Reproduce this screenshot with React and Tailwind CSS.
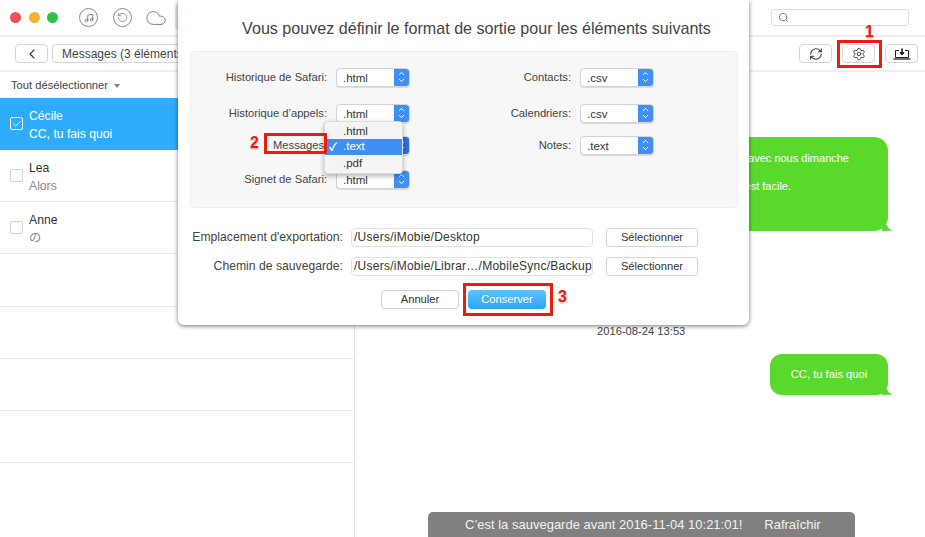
import React from "react";
import { ChevronLeft, Check, Search, Settings, RefreshCw, RotateCcw, Cloud, Music, ChevronUp, ChevronDown } from "lucide-react";

const font = { fontFamily: '"Liberation Sans", "Noto Sans CJK JP", sans-serif' };

function Select({ value, dark }) {
  return (
    <div className="flex h-[19px] w-[74px] items-stretch overflow-hidden rounded-[4px] border border-[#d4d4d4] bg-white shadow-[0_1px_1px_rgba(0,0,0,0.12)]">
      <div className="flex-1 pl-[6px] text-[11.5px] leading-[18px] text-[#333]">{value}</div>
      <div className={`flex w-[15px] flex-col items-center justify-center ${dark ? "bg-[#2a6fd6]" : "bg-[#3f8ff5]"}`}>
        <ChevronUp size={9} strokeWidth={2.5} className="mb-[-2px] text-white" />
        <ChevronDown size={9} strokeWidth={2.5} className="text-white" />
      </div>
    </div>
  );
}

function FieldRow({ label, value, dark, labelClass = "" }) {
  return (
    <div className="flex items-center">
      <div className={`w-[136px] text-right text-[11.2px] text-[#444] ${labelClass}`}>{label}</div>
      <div className="ml-[9px]"><Select value={value} dark={dark} /></div>
    </div>
  );
}

function ContactRow({ name, sub, selected }) {
  return (
    <div className={`flex h-[52px] items-center border-b ${selected ? "border-[#2fabfc] bg-[#2fabfc]" : "border-[#ececec] bg-white"}`}>
      <div className={`ml-[10px] flex h-[13px] w-[13px] items-center justify-center rounded-[2px] border ${selected ? "border-white" : "border-[#d4d4d4]"}`}>
        {selected && <Check size={10} strokeWidth={2} className="text-white" />}
      </div>
      <div className="ml-[6px] flex flex-col gap-[3px] pt-[4px] text-[12.2px] leading-[15px]">
        <div className={selected ? "text-white" : "text-[#333]"}>{name}</div>
        <div className={selected ? "text-white" : "text-[#8a8a8a]"}>{sub}</div>
      </div>
    </div>
  );
}

function ToolBtn({ children }) {
  return <div className="flex h-[19px] w-[33px] items-center justify-center rounded-[4px] border border-[#d6d6d6] bg-white text-[#333]">{children}</div>;
}

function PathRow({ label, value }) {
  return (
    <div className="flex items-center">
      <div className="w-[153px] whitespace-nowrap text-right text-[12.2px] text-[#444]">{label}</div>
      <div className="ml-[8px] h-[19px] w-[242px] whitespace-nowrap rounded-[4px] border border-[#e2e2e2] pl-[2px] text-[12px] leading-[17px] tracking-[0.25px] text-[#333]">{value}</div>
      <div className="ml-[13px] flex h-[19px] w-[92px] items-center justify-center rounded-[3px] border border-[#d6d6d6] text-[11.2px] text-[#333]">Sélectionner</div>
    </div>
  );
}

function Num({ children, className }) {
  return (
    <div className={`absolute text-[16px] font-bold leading-none text-[#ee1a10] [text-shadow:0_0_2px_#fff,0_1px_2px_rgba(0,0,0,0.45)] ${className}`}>{children}</div>
  );
}

function Tail() {
  return (
    <svg className="absolute bottom-0 right-[-6px]" width="12" height="6" viewBox="0 0 12 6"><path d="M0 0h5q1 4 6 5.5L0 6z" fill="#5ad92d" /></svg>
  );
}

export default function App() {
  return (
    <div style={font} className="relative flex h-[537px] w-[925px] flex-col overflow-hidden bg-white">
      {/* Title bar */}
      <div className="flex h-[37px] shrink-0 items-center border-b-2 border-[#eeeeee] pl-[10px]">
        <div className="flex gap-[7.5px]">
          <div className="h-[11px] w-[11px] rounded-full bg-[#f0524f]" />
          <div className="h-[11px] w-[11px] rounded-full bg-[#f9b02c]" />
          <div className="h-[11px] w-[11px] rounded-full bg-[#2fc24a]" />
        </div>
        <div className="ml-[21px] flex h-[19px] w-[19px] items-center justify-center rounded-full border border-[#8a8a8a]">
          <Music size={10} strokeWidth={2.2} className="text-[#777]" />
        </div>
        <div className="ml-[15px] flex h-[19px] w-[19px] items-center justify-center rounded-full border border-[#8a8a8a]">
          <RotateCcw size={11} strokeWidth={1.6} className="text-[#777]" />
        </div>
        <Cloud size={22} strokeWidth={1} className="ml-[13px] text-[#777]" />
        <div className="ml-[8px] h-[25px] w-[14px] rounded-l-[4px] bg-[#d8ecfb]" />
        <div className="ml-auto mr-[16px] flex h-[17px] w-[138px] items-center rounded-[3px] border border-[#dedede] pl-[6px]">
          <Search size={11} className="text-[#777]" />
        </div>
      </div>

      {/* Toolbar */}
      <div className="flex h-[35px] shrink-0 items-center border-b-2 border-[#eeeeee] pl-[15px] pr-[7px]">
        <div className="flex h-[19px] w-[33px] items-center justify-center rounded-[4px] border border-[#d6d6d6]">
          <ChevronLeft size={16} strokeWidth={1.7} className="text-[#333]" />
        </div>
        <div className="ml-[4px] flex h-[19px] w-[140px] items-center rounded-[4px] border border-[#d6d6d6] pl-[9px] pt-[1px] text-[12px] text-[#444]">Messages (3 éléments)</div>
        <div className="ml-auto flex gap-[10px]">
          <ToolBtn><RefreshCw size={14} strokeWidth={1.8} /></ToolBtn>
          <ToolBtn><Settings size={14} strokeWidth={1.5} /></ToolBtn>
          <ToolBtn>
            <svg width="18" height="12" viewBox="0 0 18 12" fill="none" stroke="#222" strokeWidth="1">
              <path d="M6 2.5H2.5v7h13v-7H12" />
              <path d="M0.5 11h17" strokeWidth="1.3" />
              <path d="M9 0.5v5" strokeWidth="1.6" />
              <path d="M7 4.5 9 7l2-2.5z" fill="#222" />
            </svg>
          </ToolBtn>
        </div>
      </div>

      {/* Body */}
      <div className="flex min-h-0 flex-1">
        <div className="w-[355px] shrink-0 border-r border-[#e4e4e4]">
          <div className="flex h-[26px] items-center pl-[11px] text-[11.2px] text-[#444]">
            Tout désélectionner
            <span className="ml-[6px] mt-[1px] h-0 w-0 border-x-[3.5px] border-t-[4px] border-x-transparent border-t-[#888]" />
          </div>
          <ContactRow name="Cécile" sub="CC, tu fais quoi" selected />
          <ContactRow name="Lea" sub="Alors" />
          <ContactRow name="Anne" sub="の" />
          <div className="h-[53px] border-b border-[#ececec]" />
          <div className="h-[52px] border-b border-[#ececec]" />
          <div className="h-[52px] border-b border-[#ececec]" />
          <div className="h-[52px] border-b border-[#ececec]" />
        </div>

        <div className="relative flex min-w-0 flex-1 flex-col items-end pr-[37px] pt-[65px]">
          <div className="relative flex h-[94px] w-[300px] flex-col items-end rounded-[14px] bg-[#5ad92d] pt-[14px] text-[11px] leading-[14px] text-white">
            <div className="pr-[39px]">avec nous dimanche</div>
            <div className="mt-[14px] pr-[97px]">est facile.</div>
            <Tail />
          </div>
          <div className="mt-[93px] self-start pl-[242px] text-[11.2px] leading-[14px] text-[#444]">2016-08-24 13:53</div>
          <div className="relative mt-[16px] flex h-[41px] w-[118px] items-center justify-center rounded-[12px] bg-[#5ad92d] text-[11.2px] text-white">
            CC, tu fais quoi
            <Tail />
          </div>
          <div className="absolute bottom-0 left-[73px] flex h-[25px] w-[427px] items-center rounded-t-[5px] bg-[#808080] pl-[37px] text-[13px] text-[#f2f2f2]">
            C’est la sauvegarde avant 2016-11-04 10:21:01!
            <span className="ml-[22px]">Rafraîchir</span>
          </div>
        </div>
      </div>

      {/* Modal */}
      <div className="absolute left-[178px] top-0 flex h-[325px] w-[571px] flex-col rounded-b-[6px] bg-white pl-[12px] pr-[11px] shadow-[0_1px_4px_rgba(0,0,0,0.55)]">
        <div className="pl-[25px] pt-[19px] text-center text-[16.1px] leading-[19px] text-[#444]">Vous pouvez définir le format de sortie pour les éléments suivants</div>
        <div className="mt-[13px] grid h-[157px] grid-cols-[244px_1fr] grid-rows-[36px_36px_28px_40px] rounded-[4px] border border-[#eeeeee] bg-[#f7f7f7] pt-[7px]">
          <FieldRow label="Historique de Safari:" value=".html" />
          <FieldRow label="Contacts:" value=".csv" />
          <FieldRow label="Historique d’appels:" value=".html" />
          <FieldRow label="Calendriers:" value=".csv" />
          <FieldRow label="Messages" value=".text" dark labelClass="pr-[3px]" />
          <FieldRow label="Notes:" value=".text" />
          <FieldRow label="Signet de Safari:" value=".html" />
        </div>
        <div className="mt-[20px] flex flex-col gap-[10px]">
          <PathRow label="Emplacement d'exportation:" value="/Users/iMobie/Desktop" />
          <PathRow label="Chemin de sauvegarde:" value="/Users/iMobie/Librar…/MobileSync/Backup" />
        </div>
        <div className="mt-[14px] flex justify-center gap-[9px] pr-[1px]">
          <div className="flex h-[19px] w-[78px] items-center justify-center rounded-[4px] border border-[#d0d0d0] text-[11.2px] text-[#333]">Annuler</div>
          <div className="flex h-[19px] w-[78px] items-center justify-center rounded-[4px] bg-gradient-to-b from-[#5cc1fb] to-[#2ba4f7] text-[11.2px] text-white">Conserver</div>
        </div>
      </div>

      {/* Drop-down menu */}
      <div className="absolute left-[324px] top-[121px] h-[53px] w-[79px] rounded-[4px] border border-[#dcdcdc] bg-[#f4f4f4] pt-[2px] text-[11.5px] text-[#333] shadow-[0_2px_5px_rgba(0,0,0,0.3)]">
        <div className="h-[15px] pl-[18px] leading-[15px]">.html</div>
        <div className="flex h-[16px] items-center bg-[#3f8ff5] text-white">
          <span className="w-[18px] pl-[4px] text-[11px] font-bold">✓</span>.text
        </div>
        <div className="h-[16px] pl-[18px] leading-[16px]">.pdf</div>
      </div>

      {/* Annotations */}
      <div className="absolute left-[837px] top-[40px] h-[28px] w-[45px] border-[3px] border-[#ee1a10]" />
      <div className="absolute left-[264px] top-[133px] h-[21px] w-[63px] border-[3px] border-[#ee1a10]" />
      <div className="absolute left-[463px] top-[283px] h-[33px] w-[90px] border-[3px] border-[#ee1a10]" />
      <Num className="left-[865px] top-[24px]">1</Num>
      <Num className="left-[250px] top-[135px]">2</Num>
      <Num className="left-[558px] top-[289px]">3</Num>
    </div>
  );
}
